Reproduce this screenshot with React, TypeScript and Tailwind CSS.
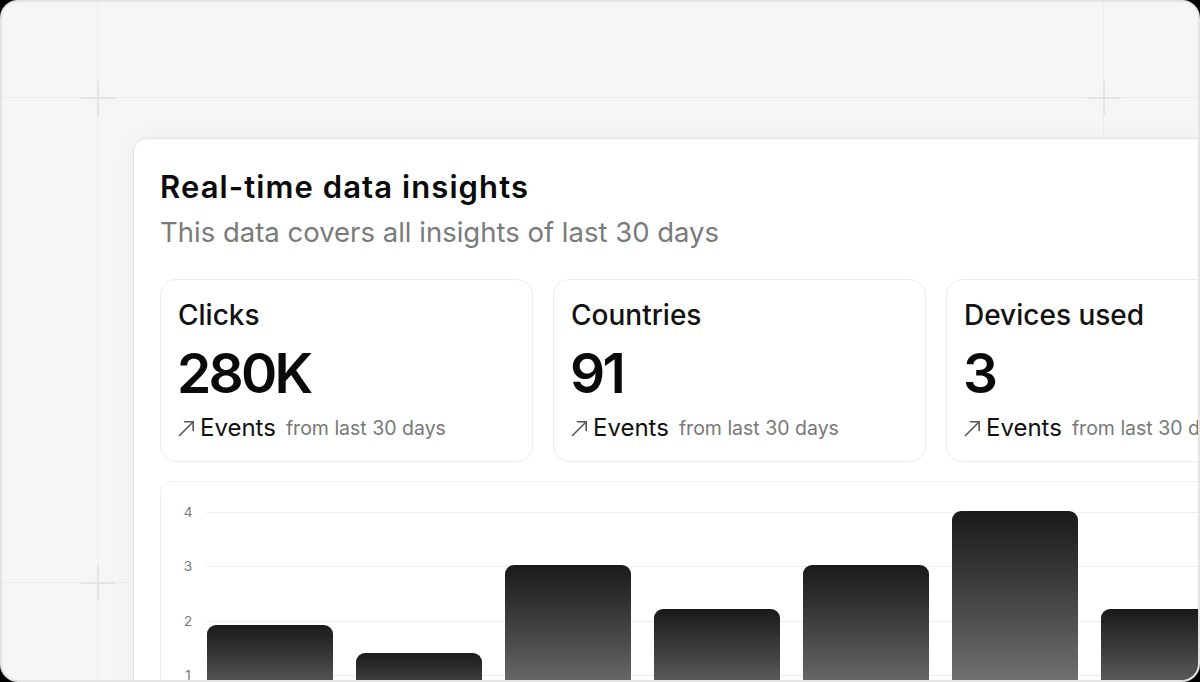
const stats = [
  { label: "Clicks", value: "280K" },
  { label: "Countries", value: "91" },
  { label: "Devices used", value: "3" },
];

// bar heights in px above the zero line
const bars = [105, 77, 165, 121, 165, 219, 121];

const ticks = ["4", "3", "2", "1"];

function TrendArrow() {
  return (
    <svg width="17" height="17" viewBox="0 0 17 17" fill="none" className="shrink-0">
      <path d="M1.5 15.5 15 2" stroke="#555" strokeWidth="1.6" strokeLinecap="round" />
      <path d="M6.5 1.8H15.2V10.5" stroke="#555" strokeWidth="1.6" strokeLinecap="round" strokeLinejoin="round" />
    </svg>
  );
}

function Plus({ className }: { className: string }) {
  return (
    <div className={`absolute h-[34px] w-[34px] ${className}`}>
      <div className="absolute left-0 top-[16px] h-[2px] w-full bg-[#e4e4e4]" />
      <div className="absolute left-[16px] top-0 h-full w-[2px] bg-[#e4e4e4]" />
    </div>
  );
}

export default function App() {
  return (
    <div className="h-[682px] w-[1200px] bg-black font-['Inter',sans-serif]">
      <div className="relative h-full w-full overflow-hidden rounded-[18px] border-2 border-[#e4e4e4] bg-[#f6f6f6]">
        {/* background grid */}
        <div className="absolute left-[95px] top-0 h-full w-px bg-[#ececec]" />
        <div className="absolute left-[1101px] top-0 h-full w-px bg-[#ececec]" />
        <div className="absolute left-0 top-[95px] h-px w-full bg-[#ececec]" />
        <div className="absolute left-0 top-[580px] h-px w-full bg-[#ececec]" />
        <Plus className="left-[79px] top-[79px]" />
        <Plus className="left-[1085px] top-[79px]" />
        <Plus className="left-[79px] top-[564px]" />

        <div className="relative pl-[131px] pt-[136px]">
          <div className="w-[1200px] rounded-[14px] border-[1.5px] border-[#e3e3e3] bg-white px-[26px] pt-[29px] shadow-[0_0_24px_rgba(0,0,0,0.04)]">
            <h1 className="text-[31px] font-semibold leading-[38px] tracking-[0.035em] text-[#0a0a0a]">
              Real-time data insights
            </h1>
            <p className="mt-[9px] text-[27.5px] leading-[34px] text-[#7a7a7a]">
              This data covers all insights of last 30 days
            </p>

            <div className="mt-[30px] flex gap-[20px]">
              {stats.map((s) => (
                <div
                  key={s.label}
                  className="w-[373px] shrink-0 rounded-[16px] border-[1.5px] border-[#ededed] px-[17px] pb-[18px] pt-[18px]"
                >
                  <div className="text-[28px] font-medium leading-[34px] text-[#111]">
                    {s.label}
                  </div>
                  <div className="-ml-[1px] mt-[11px] text-[55px] font-semibold leading-[60px] tracking-[-0.05em] text-[#0a0a0a]">
                    {s.value}
                  </div>
                  <div className="mt-[10px] flex h-[30px] items-center">
                    <TrendArrow />
                    <span className="ml-[5px] text-[24px] leading-[30px] text-[#111]">Events</span>
                    <span className="ml-[10px] text-[19.5px] leading-[30px] text-[#777]">
                      from last 30 days
                    </span>
                  </div>
                </div>
              ))}
            </div>

            <div className="mt-[19px] h-[320px] rounded-[12px] border-[1.5px] border-[#efefef] pt-[29.5px]">
              <div className="grid">
                <div className="col-start-1 row-start-1">
                  {ticks.map((t) => (
                    <div key={t} className="flex h-[54.5px]">
                      <div className="ml-[17px] w-[20px] -translate-y-[8px] text-center text-[13.5px] leading-[16px] text-[#7a7a7a]">
                        {t}
                      </div>
                      <div className="ml-[8px] flex-1 border-t border-[#eeeeee]" />
                    </div>
                  ))}
                </div>
                <div className="col-start-1 row-start-1 -mt-[29.5px] ml-[46px] flex items-end gap-[23px]">
                  {bars.map((h, i) => (
                    <div
                      key={i}
                      className="w-[126px] shrink-0 rounded-t-[9px] bg-gradient-to-b from-[#1a1a1a] to-[#8c8c8c]"
                      style={{ height: h }}
                    />
                  ))}
                </div>
              </div>
            </div>
          </div>
        </div>
      </div>
    </div>
  );
}
